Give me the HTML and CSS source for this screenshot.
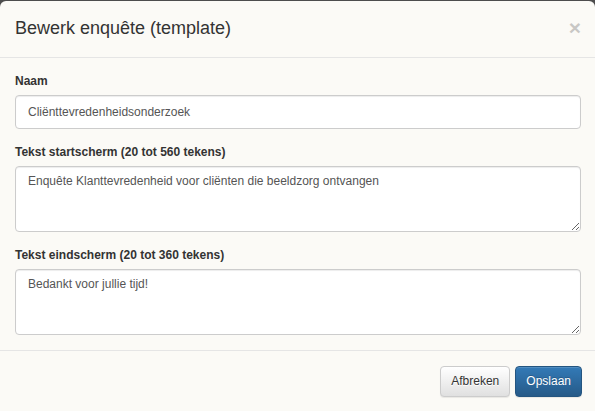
FILE: index.html
```html
<!DOCTYPE html>
<html lang="nl">
<head>
<meta charset="utf-8">
<title>Bewerk enquête (template)</title>
<link rel="stylesheet" href="styles.css">
</head>
<body>
<div class="modal">
  <div class="modal-header">
    <h4 class="modal-title">Bewerk enquête (template)</h4>
    <button class="close" type="button" aria-label="Sluiten">×</button>
  </div>
  <div class="modal-body">
    <div class="form-group">
      <label class="label" for="naam">Naam</label>
      <input class="form-control" id="naam" type="text" value="Cliënttevredenheidsonderzoek">
    </div>
    <div class="form-group">
      <label class="label" for="start">Tekst startscherm (20 tot 560 tekens)</label>
      <textarea class="form-control area" id="start">Enquête Klanttevredenheid voor cliënten die beeldzorg ontvangen</textarea>
    </div>
    <div class="form-group last">
      <label class="label" for="eind">Tekst eindscherm (20 tot 360 tekens)</label>
      <textarea class="form-control area" id="eind">Bedankt voor jullie tijd!</textarea>
    </div>
  </div>
  <div class="modal-footer">
    <button class="btn btn-default" type="button">Afbreken</button>
    <button class="btn btn-primary" type="button">Opslaan</button>
  </div>
</div>
</body>
</html>
```
FILE: styles.css
```css
* { box-sizing: border-box; }
html, body {
  margin: 0;
  padding: 0;
  width: 595px;
  height: 411px;
  overflow: hidden;
  background: #4d4d4d;
}
body {
  font-family: "Liberation Sans", Arial, sans-serif;
  font-size: 12px;
  line-height: 1.42857;
  color: #333;
  padding-top: 1px;
}
.modal {
  background: #fbfaf6;
  border-radius: 6px;
  height: 420px;
  width: 595px;
}
.modal-header {
  display: flex;
  align-items: flex-start;
  justify-content: space-between;
  padding: 15px 14px 15px 15px;
  border-bottom: 1px solid #e5e5e5;
}
.modal-title {
  margin: 0;
  font-size: 18px;
  font-weight: 500;
  line-height: 1.42857;
  color: #333;
}
.close {
  margin-top: 1px;
  padding: 0;
  border: 0;
  background: transparent;
  font-family: "Liberation Sans", Arial, sans-serif;
  font-size: 21px;
  font-weight: bold;
  line-height: 1;
  color: #000;
  text-shadow: 0 1px 0 #fff;
  opacity: 0.2;
  cursor: pointer;
}
.modal-body {
  padding: 15px 14px 15px 15px;
}
.form-group {
  display: flex;
  flex-direction: column;
  margin-bottom: 15px;
}
.form-group.last { margin-bottom: 0; }
.label {
  font-weight: bold;
  margin-bottom: 5px;
}
.form-control {
  display: block;
  width: 100%;
  height: 34px;
  padding: 6px 12px;
  font-family: "Liberation Sans", Arial, sans-serif;
  font-size: 12px;
  line-height: 1.42857;
  color: #555;
  background: #fff;
  border: 1px solid #ccc;
  border-radius: 4px;
  box-shadow: inset 0 1px 1px rgba(0,0,0,.075);
  margin: 0;
}
.area {
  height: 66px;
  resize: vertical;
}
.modal-footer {
  display: flex;
  justify-content: flex-end;
  gap: 5px;
  padding: 15px 13px 15px 15px;
  border-top: 1px solid #e5e5e5;
}
.btn {
  padding: 6px 10px;
  font-family: "Liberation Sans", Arial, sans-serif;
  font-size: 12px;
  line-height: 1.42857;
  border-radius: 4px;
  border: 1px solid transparent;
  cursor: pointer;
}
.btn-default {
  color: #333;
  background-image: linear-gradient(to bottom, #fff 0, #e0e0e0 100%);
  border-color: #ccc;
  text-shadow: 0 1px 0 #fff;
  box-shadow: inset 0 1px 0 rgba(255,255,255,.15), 0 1px 1px rgba(0,0,0,.075);
}
.btn-primary {
  color: #fff;
  background-image: linear-gradient(to bottom, #337ab7 0, #265a88 100%);
  border-color: #245580;
  text-shadow: 0 -1px 0 rgba(0,0,0,.2);
  box-shadow: inset 0 1px 0 rgba(255,255,255,.15), 0 1px 1px rgba(0,0,0,.075);
}
```
